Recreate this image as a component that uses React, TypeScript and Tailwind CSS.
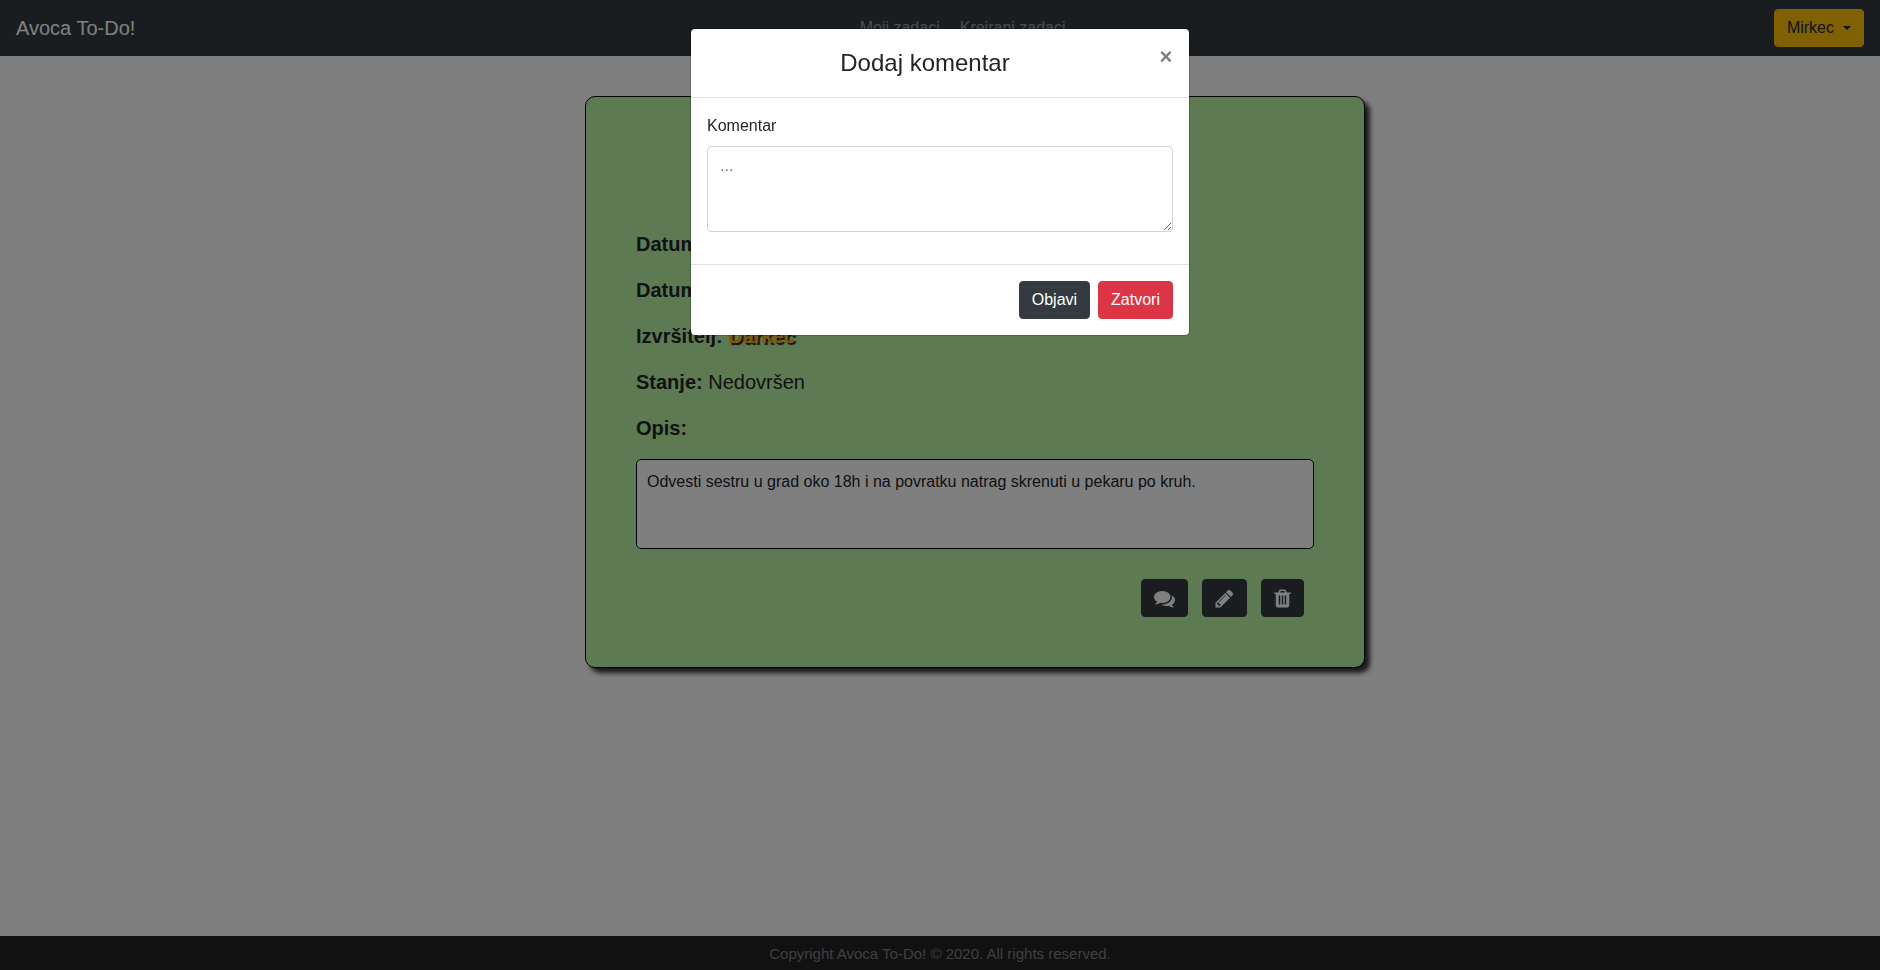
import React from "react";

type IconProps = { viewBox: string; className: string; path: string };

const Icon = ({ viewBox, className, path }: IconProps) => (
  <svg viewBox={viewBox} className={className} fill="currentColor" aria-hidden="true">
    <path d={path} />
  </svg>
);

const COMMENTS =
  "M1408 768q0 139-94 257t-256.5 186.5-353.5 68.5q-86 0-176-16-124 88-278 128-36 9-86 16h-3q-11 0-20.5-8t-11.5-21q-1-3-1-6.5t.5-6.5 2-6l2.5-5 3.5-5.5 4-5 4.5-5 4-4.5q5-6 23-25t26-29.5 22.5-29 25-38.5 20.5-44q-124-72-195-177t-71-224q0-139 94-257t256.5-186.5 353.5-68.5 353.5 68.5 256.5 186.5 94 257zm384 256q0 120-71 224.5t-195 176.5q10 24 20.5 44t25 38.5 22.5 29 26 29.5 23 25q1 1 4 4.5t4.5 5 4 5 3.5 5.5l2.5 5 2 6 .5 6.5-1 6.5q-3 14-13 22t-22 7q-50-7-86-16-154-40-278-128-90 16-176 16-271 0-472-132 58 4 88 4 161 0 309-45t264-129q125-92 192-212t67-254q0-77-23-152 129 71 204 178t75 230z";
const PENCIL =
  "M491 1536l91-91-235-235-91 91v107h128v128h107zm523-928q0-22-22-22-10 0-17 7l-542 542q-7 7-7 17 0 22 22 22 10 0 17-7l542-542q7-7 7-17zm-54-192l416 416-832 832h-416v-416zm683 96q0 53-37 90l-166 166-416-416 166-165q36-38 90-38 53 0 91 38l235 234q37 39 37 91z";
const TRASH =
  "M704 1376v-704q0-14-9-23t-23-9h-64q-14 0-23 9t-9 23v704q0 14 9 23t23 9h64q14 0 23-9t9-23zm256 0v-704q0-14-9-23t-23-9h-64q-14 0-23 9t-9 23v704q0 14 9 23t23 9h64q14 0 23-9t9-23zm256 0v-704q0-14-9-23t-23-9h-64q-14 0-23 9t-9 23v704q0 14 9 23t23 9h64q14 0 23-9t9-23zm-544-992h448l-48-117q-7-9-17-11h-317q-10 2-17 11zm928 32v64q0 14-9 23t-23 9h-96v948q0 83-47 143.5t-113 60.5h-832q-66 0-113-58.5t-47-141.5v-952h-96q-14 0-23-9t-9-23v-64q0-14 9-23t23-9h309l70-167q15-37 54-63t79-26h320q40 0 79 26t54 63l70 167h309q14 0 23 9t9 23z";

const Navbar = () => (
  <header className="flex items-center bg-[#343a40] px-4 py-2">
    <a href="#" className="mr-4 py-1 text-xl leading-8 text-white">
      Avoca To-Do!
    </a>
    <nav className="flex flex-1 justify-center text-white/50">
      <a href="#" className="p-2">Moji zadaci</a>
      <a href="#" className="ml-1 p-2">Kreirani zadaci</a>
    </nav>
    <button
      type="button"
      className="flex items-center gap-[9px] rounded border border-[#ffc107] bg-[#ffc107] px-3 py-1.5 text-[#212529]"
    >
      Mirkec
      <span className="border-x-4 border-t-4 border-x-transparent border-t-[#212529]" />
    </button>
  </header>
);

const actionButton =
  "flex h-[38px] items-center rounded border border-[#343a40] bg-[#343a40] px-3 text-white";

const TaskCard = () => (
  <article className="w-full max-w-[780px] rounded-[10px] border border-black bg-[#bcf4a4] px-[50px] pt-[132px] pb-[50px] shadow-[5px_5px_5px_#333]">
    <div className="flex flex-col gap-4 text-xl leading-[30px]">
      <p className="font-bold">Datum</p>
      <p className="font-bold">Datum</p>
      <p>
        <b>Izvršitelj:</b>{" "}
        <a href="#" className="font-bold text-[#ffb300] [text-shadow:2px_2px_1px_#222]">
          Darkec
        </a>
      </p>
      <p>
        <b>Stanje:</b> Nedovršen
      </p>
      <p className="font-bold">Opis:</p>
    </div>
    <p className="mt-4 min-h-[90px] rounded-[5px] border border-black bg-white p-[10px]">
      Odvesti sestru u grad oko 18h i na povratku natrag skrenuti u pekaru po kruh.
    </p>
    <div className="mt-[30px] flex justify-end gap-[14px] pr-[10px]">
      <button type="button" aria-label="Komentari" className={actionButton}>
        <Icon viewBox="0 0 1792 1792" className="size-[21px]" path={COMMENTS} />
      </button>
      <button type="button" aria-label="Uredi" className={actionButton}>
        <Icon viewBox="128 0 1536 1792" className="h-[21px] w-[19px]" path={PENCIL} />
      </button>
      <button type="button" aria-label="Obriši" className={actionButton}>
        <Icon viewBox="192 0 1408 1792" className="h-[21px] w-[17px]" path={TRASH} />
      </button>
    </div>
  </article>
);

const CommentDialog = () => (
  <div className="fixed inset-0 flex items-start justify-center bg-black/50 pt-7">
    <form
      role="dialog"
      aria-modal="true"
      aria-labelledby="dialog-title"
      className="w-full max-w-[500px] rounded-[5px] border border-black/20 bg-white bg-clip-padding"
    >
      <div className="flex items-start border-b border-[#dee2e6] p-4">
        <h4 id="dialog-title" className="flex-1 text-center text-2xl leading-9">
          Dodaj komentar
        </h4>
        <button
          type="button"
          aria-label="Zatvori prozor"
          className="-my-4 -mr-4 w-[46px] py-4 text-[22px] leading-6 font-bold text-black/50"
        >
          ×
        </button>
      </div>
      <div className="p-4">
        <label htmlFor="comment" className="mb-2 block">
          Komentar
        </label>
        <textarea
          id="comment"
          rows={3}
          placeholder="..."
          className="mb-4 block w-full resize rounded border border-[#ced4da] bg-white px-3 pt-[7px] pb-[5px] placeholder:text-[#6c757d]"
        />
      </div>
      <div className="flex justify-end gap-2 border-t border-[#dee2e6] p-4">
        <button type="submit" className="rounded border border-[#343a40] bg-[#343a40] px-3 py-1.5 text-white">
          Objavi
        </button>
        <button type="button" className="rounded border border-[#dc3545] bg-[#dc3545] px-3 py-1.5 text-white">
          Zatvori
        </button>
      </div>
    </form>
  </div>
);

export default function App() {
  return (
    <div className="flex min-h-screen flex-col bg-white font-['Liberation_Sans',Arial,sans-serif] text-base text-[#212529]">
      <Navbar />
      <main className="flex flex-1 items-start justify-center pt-10 pl-[70px]">
        <TaskCard />
      </main>
      <footer className="bg-[#222] pt-1.5 pb-1 text-center text-[15px] leading-6 text-[#808080]">
        Copyright Avoca To-Do! © 2020. All rights reserved.
      </footer>
      <CommentDialog />
    </div>
  );
}
